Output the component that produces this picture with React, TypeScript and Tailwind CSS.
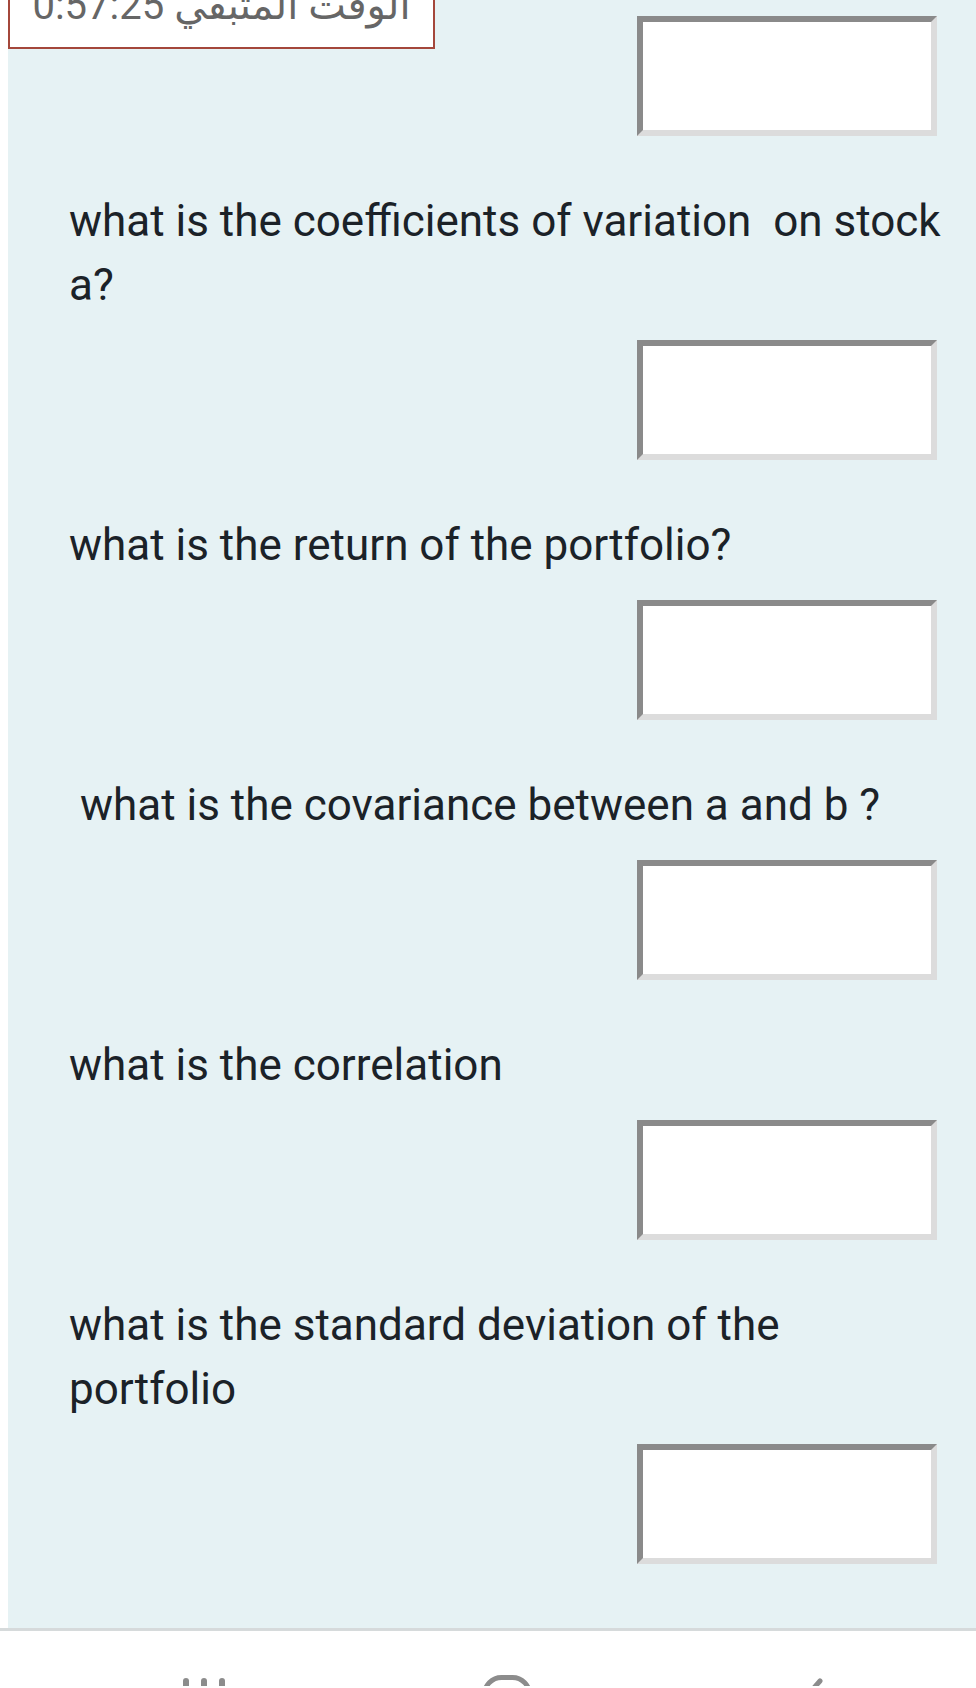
import React from 'react';

const questions = [
  { text: 'what is the coefficients of variation  on stock\na?' },
  { text: 'what is the return of the portfolio?' },
  { text: ' what is the covariance between a and b ?' },
  { text: 'what is the correlation' },
  { text: 'what is the standard deviation of the\nportfolio' },
];

function AnswerBox() {
  return (
    <div className="self-end mr-[39px] w-[300px] h-[120px] bg-white border-[6px] border-t-[#8a8a8a] border-l-[#8a8a8a] border-b-[#dcdcdc] border-r-[#dcdcdc]" />
  );
}

function NavBar() {
  return (
    <div className="h-[58px] bg-white border-t-[3px] border-[#d6dadb] flex items-start overflow-hidden">
      <svg className="ml-[183px] mt-[47px]" width="44" height="20" viewBox="0 0 44 20">
        <rect x="0" y="0" width="6" height="30" rx="3" fill="#8c8c8c" />
        <rect x="18" y="0" width="6" height="30" rx="3" fill="#8c8c8c" />
        <rect x="36" y="0" width="6" height="30" rx="3" fill="#8c8c8c" />
      </svg>
      <svg className="ml-[255px] mt-[44px]" width="50" height="20" viewBox="0 0 50 20">
        <rect x="2.5" y="2.5" width="45" height="45" rx="17" fill="none" stroke="#8c8c8c" strokeWidth="5" />
      </svg>
      <svg className="ml-[262px] mt-[47px]" width="34" height="20" viewBox="0 0 34 20">
        <path d="M26 3 L4 28" fill="none" stroke="#8c8c8c" strokeWidth="5" strokeLinecap="round" />
      </svg>
    </div>
  );
}

export default function App() {
  return (
    <div className="min-h-screen bg-white font-['Roboto','DejaVu_Sans',sans-serif] overflow-hidden">
      <div className="ml-2 bg-[#e6f2f4] pb-[64px] flex flex-col">
        <div className="-mt-[22px] flex items-start justify-between">
          <div
            dir="rtl"
            className="w-[427px] h-[71px] bg-white border-2 border-[#a4473b] flex items-end justify-center pb-[21px] text-[40px] leading-none text-[#666666] whitespace-nowrap"
          >
            الوقت المتبقي 0:57:25
          </div>
          <div className="mt-[38px] mr-[39px] w-[300px] h-[120px] bg-white border-[6px] border-t-[#8a8a8a] border-l-[#8a8a8a] border-b-[#dcdcdc] border-r-[#dcdcdc]" />
        </div>
        {questions.map((q, i) => (
          <React.Fragment key={i}>
            <p className="ml-[61px] mt-[53px] mb-[23px] text-[44px] leading-[64px] text-[#1b2228] whitespace-pre">
              {q.text}
            </p>
            <AnswerBox />
          </React.Fragment>
        ))}
      </div>
      <NavBar />
    </div>
  );
}
